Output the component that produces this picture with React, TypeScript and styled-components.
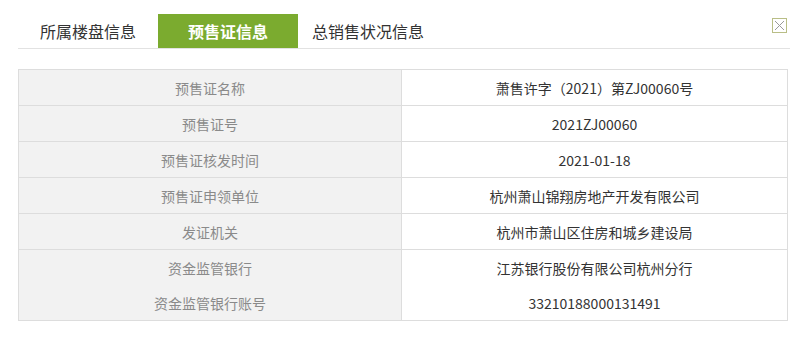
import React from "react";
import styled, { createGlobalStyle } from "styled-components";

const Global = createGlobalStyle`
  html, body { margin: 0; padding: 0; background: #fff; }
  body { font-family: "Noto Sans CJK SC", "Microsoft YaHei", sans-serif; }
`;

const Page = styled.div`
  width: 802px;
  height: 340px;
  padding: 14px 14px 0 18px;
  box-sizing: border-box;
`;

const TabBar = styled.div`
  display: flex;
  justify-content: space-between;
  align-items: flex-start;
  border-bottom: 1px solid #e2e2e2;
  margin-right: -2px;
`;

const Tabs = styled.div`
  display: flex;
`;

const Tab = styled.div<{ $active?: boolean }>`
  width: 140px;
  height: 34px;
  display: flex;
  align-items: center;
  justify-content: center;
  font-size: 16px;
  font-weight: ${(p) => (p.$active ? 700 : 400)};
  color: ${(p) => (p.$active ? "#ffffff" : "#333333")};
  background: ${(p) => (p.$active ? "#7bab2f" : "transparent")};
`;

const Close = styled.div`
  width: 13px;
  height: 13px;
  margin: 4px 3px 0 0;
  border: 1px solid #b9be86;
  display: flex;
  align-items: center;
  justify-content: center;
`;

const Table = styled.div`
  margin-top: 20px;
  width: 768px;
  border: 1px solid #dddddd;
`;

const Row = styled.div<{ $last?: boolean }>`
  display: grid;
  grid-template-columns: 383px 1fr;
  height: 35px;
  border-bottom: ${(p) => (p.$last ? "none" : "1px solid #dddddd")};
`;

const Label = styled.div`
  background: #f2f2f2;
  border-right: 1px solid #dddddd;
  color: #8a8a8a;
  font-size: 14px;
  display: flex;
  align-items: center;
  justify-content: center;
`;

const Value = styled.div`
  color: #333333;
  font-size: 14px;
  display: flex;
  align-items: center;
  justify-content: center;
`;

const rows: [string, string][] = [
  ["预售证名称", "萧售许字（2021）第ZJ00060号"],
  ["预售证号", "2021ZJ00060"],
  ["预售证核发时间", "2021-01-18"],
  ["预售证申领单位", "杭州萧山锦翔房地产开发有限公司"],
  ["发证机关", "杭州市萧山区住房和城乡建设局"],
  ["资金监管银行", "江苏银行股份有限公司杭州分行"],
  ["资金监管银行账号", "33210188000131491"],
];

export default function App() {
  return (
    <>
      <Global />
      <Page>
        <TabBar>
          <Tabs>
            <Tab>所属楼盘信息</Tab>
            <Tab $active>预售证信息</Tab>
            <Tab>总销售状况信息</Tab>
          </Tabs>
          <Close>
            <svg width="11" height="11" viewBox="0 0 11 11">
              <path d="M1 1L10 10M10 1L1 10" stroke="#9a9a9a" strokeWidth="1" />
            </svg>
          </Close>
        </TabBar>
        <Table>
          {rows.map(([k, v], i) => (
            <Row key={k} $last={i >= 5}>
              <Label>{k}</Label>
              <Value>{v}</Value>
            </Row>
          ))}
        </Table>
      </Page>
    </>
  );
}
